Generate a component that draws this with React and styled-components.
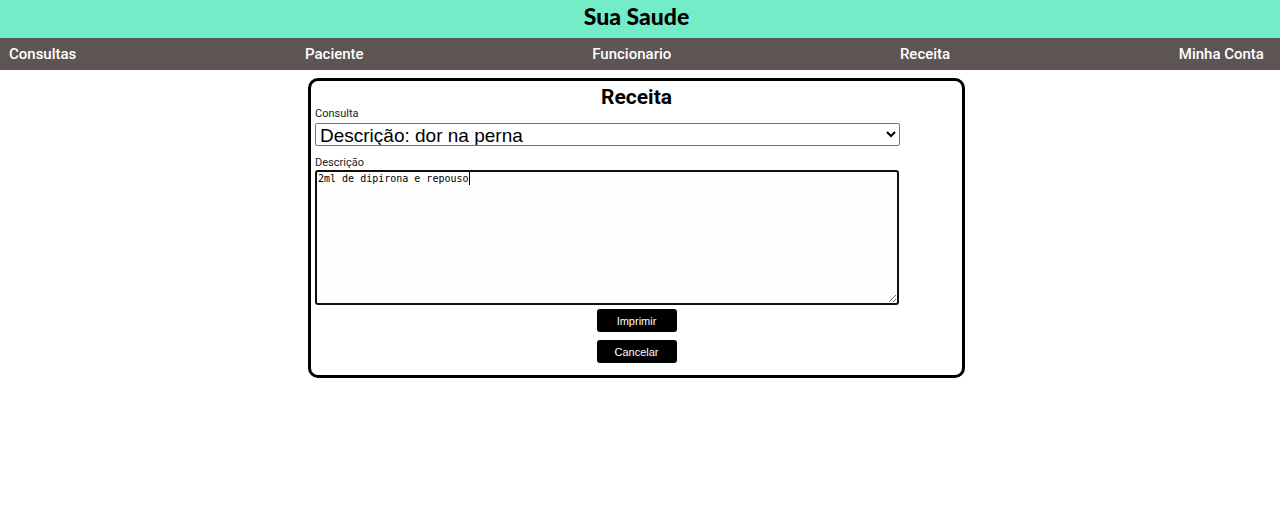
import React from "react";
import styled, { createGlobalStyle } from "styled-components";

const GlobalStyle = createGlobalStyle`
  * { box-sizing: border-box; }
  body {
    margin: 0;
    background: #fff;
    color: #000;
    font-family: Roboto, "Liberation Sans", sans-serif;
  }
`;

const Header = styled.header`
  display: flex;
  justify-content: center;
  height: 38px;
  padding-right: 7px;
  background: #72edc7;
`;

const Brand = styled.h1`
  margin: 0;
  font: 900 23px/32px Lato, sans-serif;
`;

const Nav = styled.nav`
  display: flex;
  justify-content: space-between;
  align-items: center;
  height: 32px;
  padding: 0 16px 0 9px;
  background: #5d5454;
`;

const NavLink = styled.a`
  color: #fff;
  font-size: 15px;
  font-weight: 500;
  line-height: 20px;
  text-decoration: none;
`;

const Main = styled.main`
  padding: 8px 7px 0 0;
`;

const Card = styled.form`
  display: flex;
  flex-direction: column;
  width: 52%;
  max-width: 657px;
  min-height: 300px;
  margin: 0 auto;
  padding: 4px 4px 12px;
  border: 3px solid #000;
  border-radius: 10px;
`;

const Title = styled.h2`
  margin: 0;
  text-align: center;
  font-size: 21px;
  font-weight: 700;
  line-height: 24px;
`;

const Label = styled.label`
  margin-top: ${({ $spaced }) => ($spaced ? "12px" : "0")};
  color: #222;
  font-size: 11px;
  font-weight: 400;
  line-height: 10px;
`;

const Select = styled.select`
  width: 91%;
  height: 23px;
  margin-top: 4px;
  padding: 0;
  border: 1px solid #767676;
  border-radius: 2px;
  background: #fff;
  color: #000;
  font: 19px "Liberation Sans", Arial, sans-serif;
`;

const Editor = styled.div`
  position: relative;
  width: 90%;
  min-width: 584px;
  height: 135px;
  margin-top: 2px;
  font: 10px/14px "DejaVu Sans Mono", monospace;
`;

const TextArea = styled.textarea`
  display: block;
  width: 100%;
  height: 100%;
  padding: 0 1px;
  border: 2px solid #101010;
  border-radius: 3px;
  outline: none;
  background: #fffeff;
  color: #000;
  caret-color: transparent;
  font: inherit;
  resize: both;
`;

const Caret = styled.span`
  position: absolute;
  top: 2px;
  left: calc(3px + ${({ $column }) => $column}ch);
  width: 1px;
  height: 13px;
  background: #000;
`;

const Actions = styled.div`
  display: flex;
  flex-direction: column;
  align-items: center;
  gap: 8px;
  margin-top: 4px;
`;

const Button = styled.button`
  width: 80px;
  height: 23px;
  padding: 0;
  border: 0;
  border-radius: 3px;
  background: #000;
  color: #fff;
  font: 11px "Liberation Sans", Arial, sans-serif;
`;

const links = ["Consultas", "Paciente", "Funcionario", "Receita", "Minha Conta"];
const prescription = "2ml de dipirona e repouso";

export default function App() {
  return (
    <>
      <GlobalStyle />
      <Header>
        <Brand>Sua Saude</Brand>
      </Header>
      <Nav>
        {links.map((label) => (
          <NavLink key={label} href="#">{label}</NavLink>
        ))}
      </Nav>
      <Main>
        <Card>
          <Title>Receita</Title>
          <Label htmlFor="consulta">Consulta</Label>
          <Select id="consulta">
            <option>Descrição: dor na perna</option>
          </Select>
          <Label htmlFor="descricao" $spaced>Descrição</Label>
          <Editor>
            <TextArea id="descricao" defaultValue={prescription} spellCheck={false} />
            <Caret $column={prescription.length} />
          </Editor>
          <Actions>
            <Button type="button">Imprimir</Button>
            <Button type="button">Cancelar</Button>
          </Actions>
        </Card>
      </Main>
    </>
  );
}
